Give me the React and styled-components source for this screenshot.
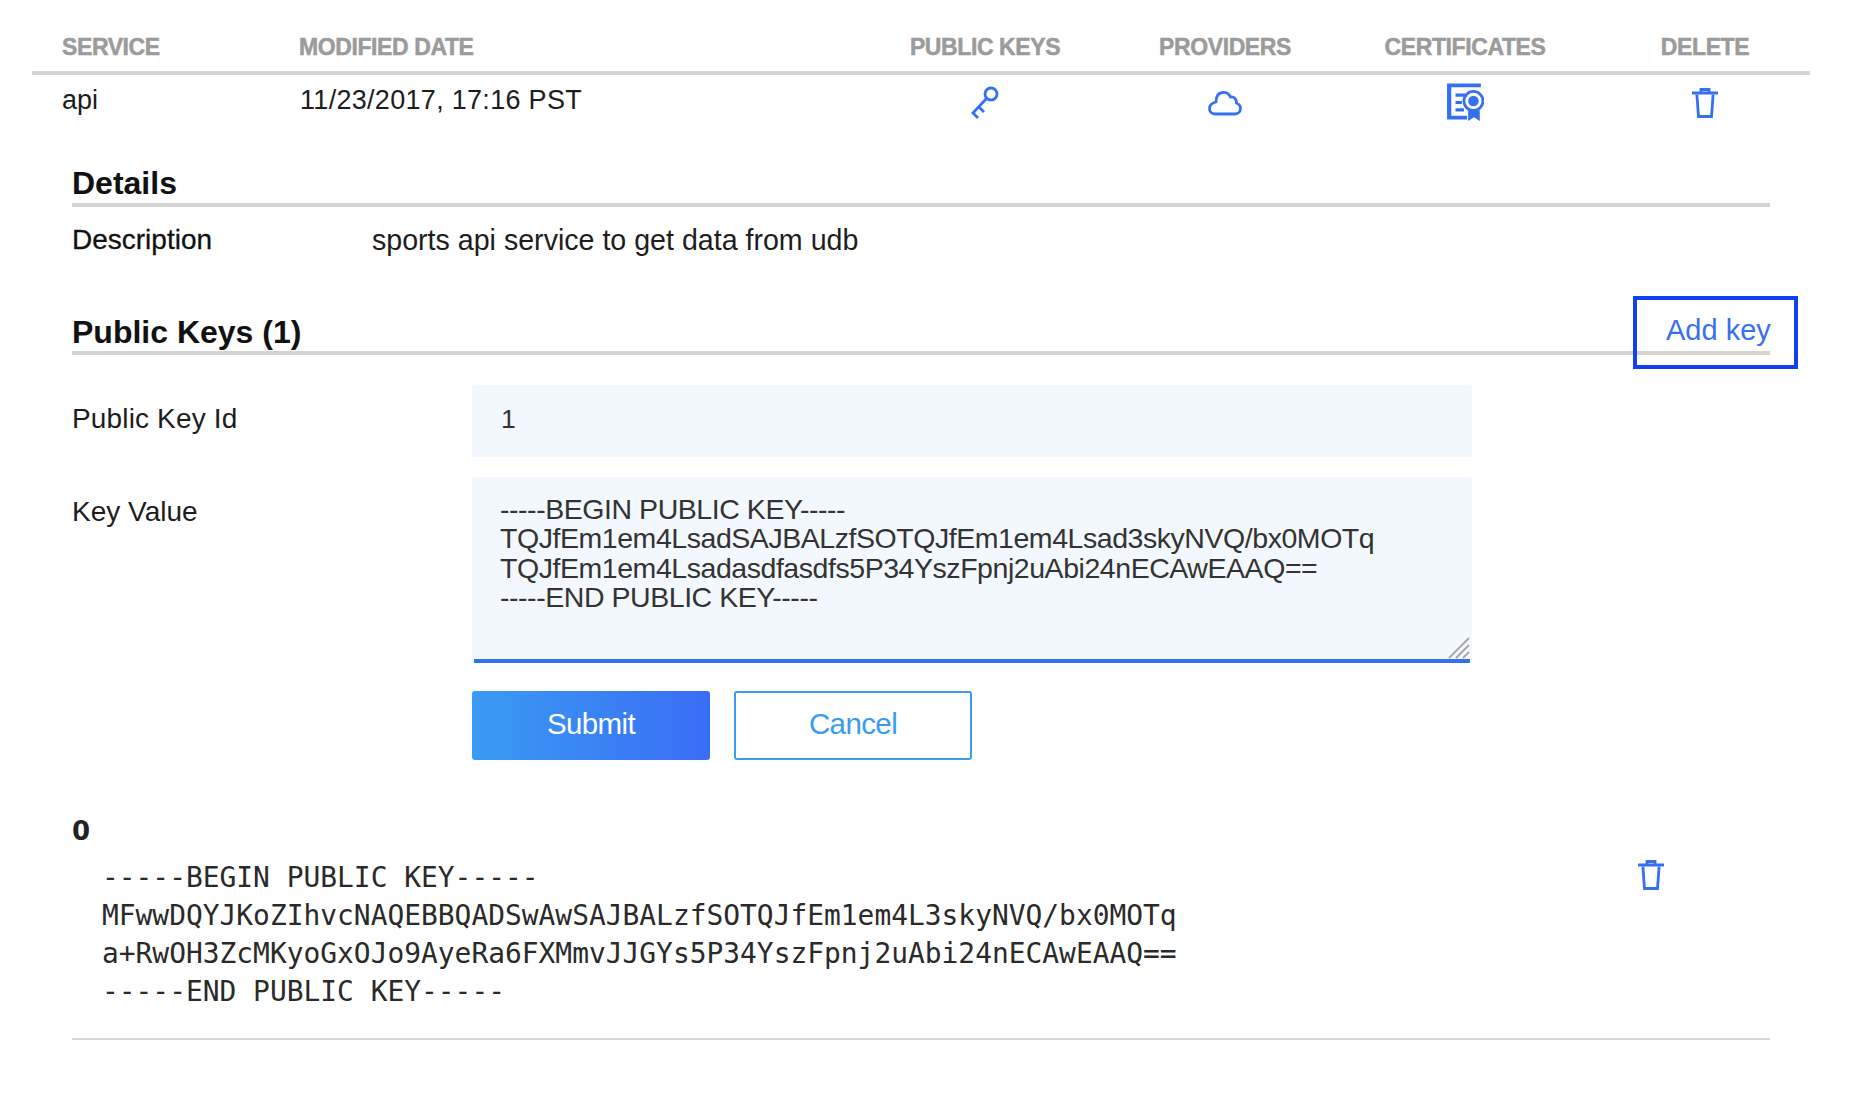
import React from "react";
import styled, { createGlobalStyle } from "styled-components";

const Global = createGlobalStyle`
  html, body { margin: 0; padding: 0; background: #fff; }
  body { font-family: "Liberation Sans", Arial, sans-serif; color: #1d1d1d; }
`;
const Page = styled.div`
  width: 1852px; height: 1106px; position: relative; overflow: hidden; padding: 32px 42px 0 32px; box-sizing: border-box;
`;
const Row = styled.div`
  display: grid;
  grid-template-columns: 237px 566px 240px 240px 240px 1fr;
  padding-left: 30px;
  align-items: center;
`;
const HeadRow = styled(Row)`
  height: 39px;
  border-bottom: 4px solid #d4d4d4;
`;
const HeadCell = styled.div`
  font-size: 23px; font-weight: 700; color: #9b9b9b; letter-spacing: -0.4px;
  -webkit-text-stroke: 0.5px #9b9b9b;
  text-align: ${p => (p.$center ? "center" : "left")};
  padding-left: ${p => (p.$last ? "15px" : "0")};
  padding-bottom: 9px;
`;
const BodyRow = styled(Row)`
  height: 56px;
  align-items: start;
`;
const Cell = styled.div`
  font-size: 27px; line-height: 30px; padding-top: 10px; color: #1d1d1d;
  letter-spacing: ${p => (p.$date ? "0.3px" : "0")};
  padding-left: ${p => (p.$date ? "1px" : "0")};
`;
const IconCell = styled.div`
  display: flex; justify-content: center; padding-top: ${p => p.$pt}px;
  padding-left: ${p => (p.$last ? "15px" : "0")};
`;
const Content = styled.div`
  width: 1698px; margin-left: 40px; padding-top: 31px; position: relative;
`;
const SectionTitle = styled.div`
  font-size: 32px; font-weight: 700; line-height: 38px; color: #111; height: 39px; padding-top: 2px;
  border-bottom: 4px solid #d4d4d4; box-sizing: content-box;
`;
const DescRow = styled.div`
  display: grid; grid-template-columns: 300px 1fr; margin-top: 16px; line-height: 34px;
`;
const DescLabel = styled.div`font-size: 28px; color: #111; -webkit-text-stroke: 0.3px #111;`;
const DescValue = styled.div`font-size: 28.6px; color: #1d1d1d;`;
const KeysTitle = styled(SectionTitle)`
  margin-top: 53px; position: relative; padding-top: 3px; height: 38px;
`;
const AddKey = styled.button`
  position: absolute; right: -28px; top: -14px; width: 165px; height: 73px; box-sizing: border-box;
  border: 4px solid #1140f0; background: transparent; padding: 0 0 4px 29px; text-align: left;
  font: 400 29px "Liberation Sans", Arial, sans-serif; color: #3a6ff0;
`;
const FormRow = styled.div`
  display: grid; grid-template-columns: 400px 1000px; margin-top: ${p => p.$mt}px;
`;
const FormLabel = styled.div`
  font-size: 28px; color: #1d1d1d; line-height: 34px; padding-top: ${p => p.$pt}px;
  letter-spacing: ${p => p.$ls || 0}px;
`;
const Field = styled.div`
  height: 72px; background: #f3f8ff; border-radius: 3px; box-sizing: border-box; padding: 0 29px;
  font-size: 26.5px; line-height: 68px; color: #333;
`;
const AreaWrap = styled.div`position: relative; width: 1000px; height: 186px;`;
const Area = styled.textarea`
  display: block; width: 1000px; height: 186px; box-sizing: border-box; margin: 0;
  background: linear-gradient(#346fef, #346fef) center bottom / calc(100% - 4px) 4px no-repeat, #f3f8ff;
  border: 0; border-radius: 3px; padding: 18px 28px 0;
  font: 400 28.5px/29.4px "Liberation Sans", Arial, sans-serif; color: #333; letter-spacing: -0.45px;
  white-space: pre; overflow: hidden; resize: none; outline: none;
`;
const Grip = styled.svg`
  position: absolute; right: 2px; bottom: 4px; display: block; stroke: #a9a9a9; stroke-width: 2; fill: none;
`;
const Buttons = styled.div`
  display: flex; gap: 24px; margin-left: 400px; margin-top: 28px;
`;
const Submit = styled.button`
  width: 238px; height: 69px; border: 0; border-radius: 3px; color: #fff; padding: 0 0 3px;
  background: linear-gradient(90deg, #3a9bf3, #3a6df5);
  font: 400 29.5px "Liberation Sans", Arial, sans-serif; letter-spacing: -0.6px;
`;
const Cancel = styled.button`
  width: 238px; height: 69px; border: 2px solid #3a9bf3; border-radius: 3px; background: #fff; color: #3a9bf3; padding: 0 0 3px;
  font: 400 29.5px "Liberation Sans", Arial, sans-serif; letter-spacing: -0.6px;
`;
const KeyBlock = styled.div`
  margin-top: 55px; display: grid; grid-template-columns: 1fr 132px; border-bottom: 2px solid #d8d8d8; padding-bottom: 27px;
`;
const KeyIndex = styled.div`
  grid-column: 1 / -1; font: 700 26px/32px "DejaVu Sans", sans-serif; color: #222; letter-spacing: -0.5px;
`;
const Mono = styled.pre`
  margin: 12px 0 0 30px; font: 400 27.9px/38px "DejaVu Sans Mono", monospace; color: #2a2a2a;
`;
const KeyDelete = styled.div`padding-top: 12px;`;

const Blue = "#3470ef";
const Svg = styled.svg`display: block; fill: none; stroke: ${Blue}; stroke-width: 2.6; stroke-linecap: square;`;

const KeyIcon = () => (
  <Svg width="30" height="34" viewBox="0 0 30 34">
    <circle cx="21" cy="8" r="6" strokeWidth="2.8" />
    <path d="M16.5 12.5 L3 27 L7 31 M9 21 L13 25" strokeWidth="2.8" />
  </Svg>
);
const CloudIcon = () => (
  <Svg width="34" height="26" viewBox="0 0 34 26">
    <path d="M7 24 H27 C30.5 24 32.5 21.5 32.5 18.5 C32.5 16 31 14 28.5 13 C28.5 9 26 6.5 22.5 7 C21 3.5 17.5 2 14.5 2.5 C10 3 8 7 8 12 C4 13 1.5 15.5 1.5 18.5 C1.5 21.5 3.5 24 7 24 Z" strokeWidth="2.8" />
  </Svg>
);
const CertIcon = () => (
  <svg width="38" height="38" viewBox="0 0 36 36" style={{ display: "block" }}>
    <path d="M1 0.5 H33 V4 H5 V31 H20 V34.5 H1 Z" fill={Blue} />
    <path d="M9 10 H18 V13 H9 Z M9 17 H15 V20 H9 Z M9 24 H17 V27 H9 Z" fill={Blue} />
    <circle cx="26" cy="17" r="9" fill="none" stroke={Blue} strokeWidth="2.6" />
    <circle cx="26" cy="17" r="5" fill={Blue} />
    <path d="M21 26 H32 V36 L26.5 32.5 L21 36 Z" fill={Blue} />
  </svg>
);
const TrashIcon = () => (
  <Svg width="26" height="32" viewBox="0 0 26 32" strokeLinecap="butt">
    <path d="M1 6 H25 M9 6 V2.5 H17 V6" strokeWidth="2.8" />
    <path d="M5 9 L6.5 29.5 H19.5 L21 9" strokeWidth="2.8" />
  </Svg>
);

const keyText = `-----BEGIN PUBLIC KEY-----
TQJfEm1em4LsadSAJBALzfSOTQJfEm1em4Lsad3skyNVQ/bx0MOTq
TQJfEm1em4Lsadasdfasdfs5P34YszFpnj2uAbi24nECAwEAAQ==
-----END PUBLIC KEY-----`;

export default function App() {
  return (
    <Page>
      <Global />
      <HeadRow>
        <HeadCell>SERVICE</HeadCell>
        <HeadCell>MODIFIED DATE</HeadCell>
        <HeadCell $center>PUBLIC KEYS</HeadCell>
        <HeadCell $center>PROVIDERS</HeadCell>
        <HeadCell $center>CERTIFICATES</HeadCell>
        <HeadCell $center $last>DELETE</HeadCell>
      </HeadRow>
      <BodyRow>
        <Cell>api</Cell>
        <Cell $date>11/23/2017, 17:16 PST</Cell>
        <IconCell $pt={11}><KeyIcon /></IconCell>
        <IconCell $pt={15}><CloudIcon /></IconCell>
        <IconCell $pt={8}><CertIcon /></IconCell>
        <IconCell $pt={12} $last><TrashIcon /></IconCell>
      </BodyRow>
      <Content>
        <SectionTitle>Details</SectionTitle>
        <DescRow>
          <DescLabel>Description</DescLabel>
          <DescValue>sports api service to get data from udb</DescValue>
        </DescRow>
        <KeysTitle>
          Public Keys (1)
          <AddKey>Add key</AddKey>
        </KeysTitle>
        <FormRow $mt={30}>
          <FormLabel $pt={17} $ls={0.15}>Public Key Id</FormLabel>
          <Field>1</Field>
        </FormRow>
        <FormRow $mt={20}>
          <FormLabel $pt={18}>Key Value</FormLabel>
          <AreaWrap>
            <Area readOnly value={keyText} />
            <Grip width="22" height="22" viewBox="0 0 22 22">
              <path d="M1 21 L21 1 M8 21 L21 8 M15 21 L21 15" />
            </Grip>
          </AreaWrap>
        </FormRow>
        <Buttons>
          <Submit>Submit</Submit>
          <Cancel>Cancel</Cancel>
        </Buttons>
        <KeyBlock>
          <KeyIndex>0</KeyIndex>
          <Mono>{`-----BEGIN PUBLIC KEY-----
MFwwDQYJKoZIhvcNAQEBBQADSwAwSAJBALzfSOTQJfEm1em4L3skyNVQ/bx0MOTq
a+RwOH3ZcMKyoGxOJo9AyeRa6FXMmvJJGYs5P34YszFpnj2uAbi24nECAwEAAQ==
-----END PUBLIC KEY-----`}</Mono>
          <KeyDelete><TrashIcon /></KeyDelete>
        </KeyBlock>
      </Content>
    </Page>
  );
}
